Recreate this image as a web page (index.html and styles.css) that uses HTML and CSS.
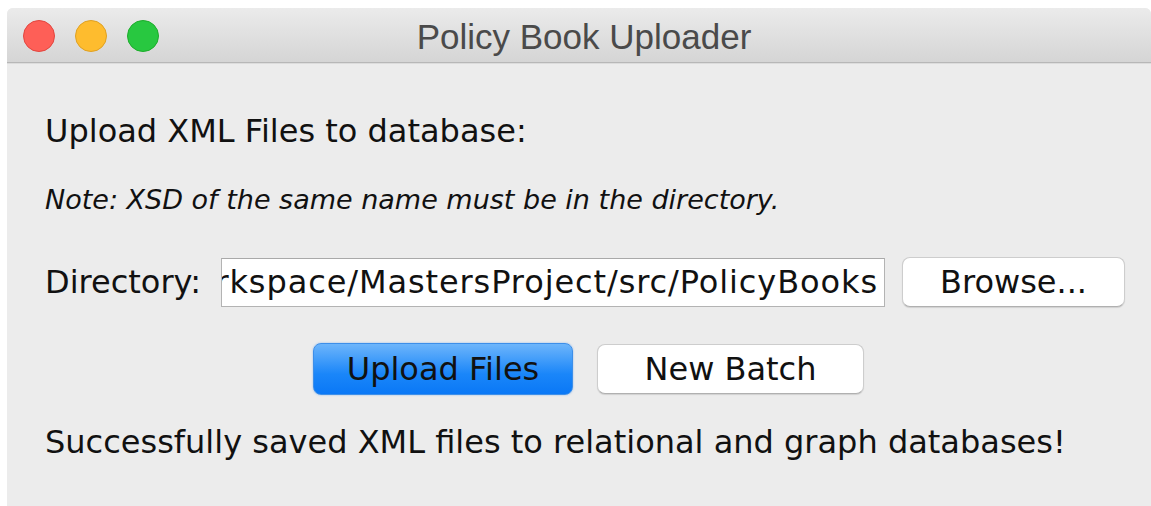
FILE: index.html
```html
<!DOCTYPE html>
<html lang="en">
<head>
<meta charset="utf-8">
<title>Policy Book Uploader</title>
<link rel="stylesheet" href="styles.css">
</head>
<body>
<div class="window">
  <header class="titlebar">
    <div class="lights">
      <span class="light close"></span>
      <span class="light minimize"></span>
      <span class="light zoom"></span>
    </div>
    <div class="title">Policy Book Uploader</div>
  </header>
  <main class="content">
    <p class="heading">Upload XML Files to database:</p>
    <p class="note">Note: XSD of the same name must be in the directory.</p>
    <div class="dir-row">
      <label class="dir-label">Directory:</label>
      <div class="field"><span class="field-text">rkspace/MastersProject/src/PolicyBooks</span></div>
      <button class="btn">Browse...</button>
    </div>
    <div class="action-row">
      <button class="btn btn-default">Upload Files</button>
      <button class="btn btn-batch">New Batch</button>
    </div>
    <p class="status">Successfully saved XML files to relational and graph databases!</p>
  </main>
</div>
</body>
</html>
```
FILE: styles.css
```css
html, body {
  margin: 0;
  padding: 0;
  background: #ffffff;
}

body {
  padding: 8px 0 0 7px;
  font-family: "DejaVu Sans", "Liberation Sans", sans-serif;
  color: #111;
}

.window {
  width: 1144px;
  height: 498px;
  background: #ececec;
  border-radius: 6px 6px 0 0;
  overflow: hidden;
  display: flex;
  flex-direction: column;
}

/* title bar */
.titlebar {
  height: 54px;
  flex: none;
  display: flex;
  align-items: center;
  background: linear-gradient(#ebebeb, #d5d5d5);
  border-bottom: 1px solid #b7b7b7;
  box-shadow: 0 1px 0 #dcdcdc;
}

.lights {
  display: flex;
  gap: 20px;
  padding-left: 16px;
  padding-top: 1px;
}

.light {
  width: 30px;
  height: 30px;
  border-radius: 50%;
  box-sizing: content-box;
}

.close { background: #fe5f57; border: 1px solid #e2463f; }
.minimize { background: #febc2e; border: 1px solid #dfa123; }
.zoom { background: #28c840; border: 1px solid #1dad2b; }

.title {
  flex: 1;
  text-align: center;
  padding-right: 142px;
  font-family: "Liberation Sans", Arial, sans-serif;
  font-size: 35px;
  color: #4a4a4a;
  margin-top: 3px;
}

/* body */
.content {
  padding: 48px 0 0 38px;
  display: flex;
  flex-direction: column;
}

.heading, .note, .status {
  margin: 0;
  font-size: 32px;
  line-height: 40px;
  white-space: nowrap;
}

.note {
  margin-top: 29px;
  font-size: 27px;
  font-style: italic;
}

.dir-row {
  margin-top: 37px;
  display: flex;
  align-items: center;
  height: 50px;
}

.dir-label {
  font-size: 32px;
  width: 176px;
  flex: none;
}

/* text field scrolled to the end of its value */
.field {
  width: 656px;
  height: 47px;
  box-sizing: content-box;
  background: #fff;
  border: 1px solid #b3b3b3;
  border-top-color: #a9a9a9;
  display: flex;
  justify-content: flex-end;
  align-items: center;
  overflow: hidden;
  padding-right: 6px;
  margin-right: 17px;
}

.field-text {
  font-size: 32px;
  letter-spacing: 0.9px;
  white-space: nowrap;
  flex: none;
}

.btn {
  font-family: "DejaVu Sans", "Liberation Sans", sans-serif;
  font-size: 32px;
  color: #111;
  background: #fff;
  border: 1px solid #cdcdcd;
  border-bottom-color: #b0b0b0;
  border-radius: 8px;
  box-shadow: 0 1px 1px rgba(0, 0, 0, 0.12);
  padding: 0;
  width: 223px;
  height: 50px;
  line-height: 46px;
}

.action-row {
  margin-top: 36px;
  display: flex;
  gap: 24px;
  padding-left: 268px;
}

.btn-default {
  width: 260px;
  height: 52px;
  background: linear-gradient(#6db5fb, #1a86f9 60%, #0a78f6);
  border: 1px solid #3d8fe9;
  box-shadow: 0 0 2px rgba(60, 140, 240, 0.55);
}

.btn-batch {
  width: 267px;
  height: 50px;
  margin-top: 1px;
}

.status {
  margin-top: 27px;
}
```
